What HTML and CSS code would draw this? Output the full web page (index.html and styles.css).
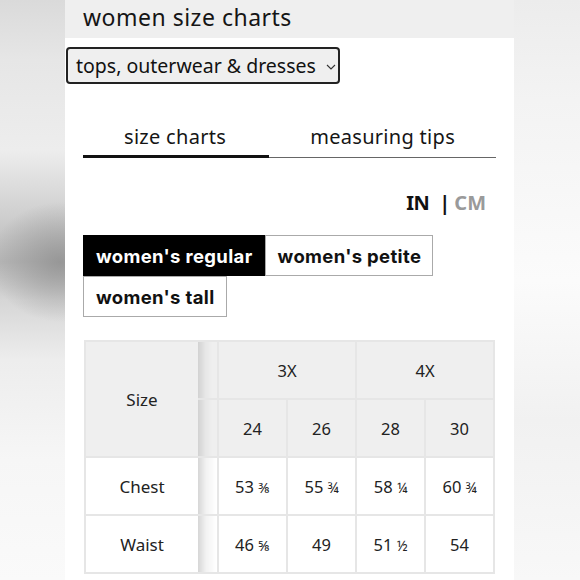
FILE: index.html
```html
<!DOCTYPE html>
<html>
<head>
<meta charset="utf-8">
<link rel="stylesheet" href="styles.css">
</head>
<body>
<div class="page">
  <div class="side side-left"></div>
  <div class="panel">
    <div class="header"><h1 class="title">women size charts</h1></div>
    <div class="select">
      <span class="select-text">tops, outerwear &amp; dresses</span>
      <svg class="chev" width="10" height="6" viewBox="0 0 10 6"><path d="M1 1 L5 5 L9 1" fill="none" stroke="#333" stroke-width="1.1"/></svg>
    </div>
    <div class="tabs">
      <div class="tab active">size charts</div>
      <div class="tab">measuring tips</div>
    </div>
    <div class="units"><span class="u-in">IN</span><span class="u-sep">|</span><span class="u-cm">CM</span></div>
    <div class="fits">
      <div class="fit on">women's regular</div>
      <div class="fit">women's petite</div>
      <div class="fit">women's tall</div>
    </div>
    <table class="chart">
      <colgroup><col class="c-size"><col class="c-sliver"><col class="c-val"><col class="c-val"><col class="c-val"><col class="c-val"></colgroup>
      <tr class="head">
        <td class="size" rowspan="2">Size</td>
        <td class="sliver"></td>
        <td colspan="2">3X</td>
        <td colspan="2">4X</td>
      </tr>
      <tr class="head">
        <td class="sliver"></td>
        <td>24</td><td>26</td><td>28</td><td>30</td>
      </tr>
      <tr>
        <td class="size">Chest</td>
        <td class="sliver"></td>
        <td>53 <span class="fr">⅜</span></td><td>55 <span class="fr">¾</span></td><td>58 <span class="fr">¼</span></td><td>60 <span class="fr">¾</span></td>
      </tr>
      <tr>
        <td class="size">Waist</td>
        <td class="sliver"></td>
        <td>46 <span class="fr">⅝</span></td><td>49</td><td>51 <span class="fr">½</span></td><td>54</td>
      </tr>
    </table>
  </div>
  <div class="side side-right"></div>
</div>
</body>
</html>
```
FILE: styles.css
```css
html, body { margin: 0; padding: 0; }
body { width: 580px; height: 580px; overflow: hidden; font-family: "Noto Sans", "Open Sans", sans-serif; color: #151515; }
.page { display: flex; width: 580px; height: 580px; }
.side { flex: none; height: 580px; }
.side-left {
  width: 65px;
  background:
    radial-gradient(ellipse 70px 60px at 60px 262px, rgba(140,140,140,0.75), rgba(160,160,160,0) 100%),
    linear-gradient(180deg, #dadada 0px, #e6e6e6 60px, #ededed 150px, #c8c8c8 230px, #b8b8b8 262px, #d6d6d6 300px, #ededed 360px, #f6f6f6 460px, #fafafa 580px);
}
.side-right {
  width: 66px;
  background: linear-gradient(180deg, #ececec 0px, #f3f3f3 100px, #fbfbfb 280px, #f1f1f1 420px, #f8f8f8 580px);
}
.panel { flex: none; width: 449px; height: 580px; background: #fff; display: flex; flex-direction: column; overflow: hidden; }
.panel > * { flex: none; }
.header { height: 38px; background: #efefef; display: flex; align-items: center; padding-left: 18px; }
.title { margin: 0; font-weight: 400; font-size: 23px; line-height: 26px; letter-spacing: 0.5px; color: #151515; margin-top: -4px; white-space: nowrap; }
.select {
  margin: 9px 0 0 1px; width: 274px; height: 37px; box-sizing: border-box;
  border: 2px solid #222; border-radius: 4px; background: #efefef;
  display: flex; align-items: center; padding-left: 8px;
}
.select-text { font-size: 19.5px; line-height: 24px; color: #111; white-space: nowrap; }
.chev { margin-left: 10px; margin-top: 2px; flex: none; }
.tabs { display: flex; margin: 41px 18px 0 18px; border-bottom: 1px solid #666; }
.tab { flex: none; white-space: nowrap; padding: 0 41px 8px 41px; font-size: 20px; line-height: 24px; color: #151515; letter-spacing: 0.3px; }
.tab.active { border-bottom: 3px solid #111; margin-bottom: -1px; padding-bottom: 6px; padding-right: 43px; }
.units { margin: 33px 28px 0 0; display: flex; justify-content: flex-end; align-items: center; font-weight: 700; font-size: 20px; line-height: 24px; }
.u-in { color: #111; letter-spacing: -0.5px; }
.u-sep { color: #111; margin: 0 4px 0 10px; font-weight: 700; }
.u-cm { color: #9a9a9a; }
.fits { display: flex; flex-wrap: wrap; margin: 20px 0 0 18px; width: 370px; }
.fit {
  height: 41px; box-sizing: border-box; border: 1px solid #aaa; background: #fff; white-space: nowrap;
  display: flex; align-items: center; padding: 0 11px 0 12px;
  font-family: "Inter", "Noto Sans", sans-serif; font-weight: 700; font-size: 18.5px; color: #111; letter-spacing: 0.35px;
}
.fit.on { background: #000; color: #fff; border-color: #000; }
.chart {
  margin: 23px 0 0 19px; border-collapse: collapse; table-layout: fixed; width: 410px;
  border: 2px solid #e8e8e8; font-size: 16.5px; color: #222;
}
.c-size { width: 113px; }
.c-sliver { width: 20px; }
.c-val { width: 69px; }
.chart td { border: 2px solid #e6e6e6; text-align: center; height: 56px; padding: 0; background: #fff; }
.chart tr.head td { background: #efefef; }
.chart td.size { font-size: 17px; }
.chart td.sliver { border-left: none; background-image: linear-gradient(90deg, rgba(0,0,0,0.16), rgba(0,0,0,0.05) 8px, rgba(0,0,0,0) 18px); }
.chart tr.head td.sliver { background-image: linear-gradient(90deg, rgba(0,0,0,0.12), rgba(0,0,0,0.03) 8px, rgba(0,0,0,0) 14px); }
.chart td.size { border-right: none; }
.fr { font-size: 14px; }
```
